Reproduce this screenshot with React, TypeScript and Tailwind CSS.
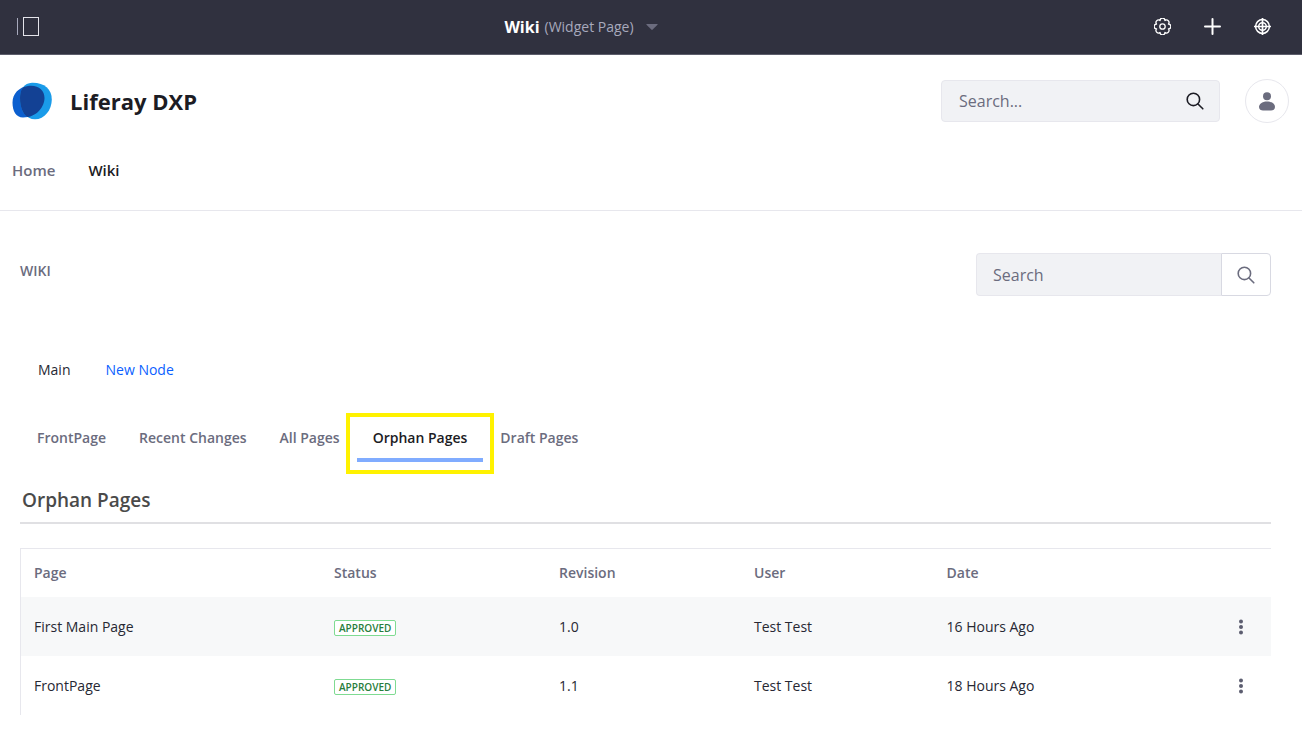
import type { ReactNode } from 'react';

interface WikiPage {
  title: string;
  status: string;
  revision: string;
  user: string;
  date: string;
}

const PAGES: WikiPage[] = [
  { title: 'First Main Page', status: 'APPROVED', revision: '1.0', user: 'Test Test', date: '16 Hours Ago' },
  { title: 'FrontPage', status: 'APPROVED', revision: '1.1', user: 'Test Test', date: '18 Hours Ago' },
];

const TABS = ['FrontPage', 'Recent Changes', 'All Pages', 'Orphan Pages', 'Draft Pages'];
const ACTIVE_TAB = 'Orphan Pages';

function SearchIcon({ className }: { className?: string }) {
  return (
    <svg viewBox="0 0 18 18" className={className} fill="none" stroke="currentColor" strokeWidth="1.6" strokeLinecap="round">
      <circle cx="7.4" cy="7.4" r="6.2" />
      <path d="M12 12l4.8 4.8" />
    </svg>
  );
}

function Logo() {
  return (
    <svg viewBox="0 0 40 38" className="w-10 h-[38px]">
      <defs>
        <clipPath id="logo-left">
          <path d="M16 4C26 2.500 32.500 8 32.500 16C32.500 24 25.500 35.500 11 35.500C4 35.500 0.500 29 0.500 20.500C0.500 11.500 7 5.300 16 4Z" />
        </clipPath>
      </defs>
      <path fill="#0b5fcf" d="M16 4C26 2.500 32.500 8 32.500 16C32.500 24 25.500 35.500 11 35.500C4 35.500 0.500 29 0.500 20.500C0.500 11.500 7 5.300 16 4Z" />
      <path fill="#1a9be9" d="M20 0.800C32 0.500 39.800 7 39.800 17.500C39.800 28 32.500 37.300 23 37.300C14 37.300 8 29.500 8 16C8 7.500 12 1.200 20 0.800Z" />
      <path clipPath="url(#logo-left)" fill="#134194" d="M20 0.800C32 0.500 39.800 7 39.800 17.500C39.800 28 32.500 37.300 23 37.300C14 37.300 8 29.500 8 16C8 7.500 12 1.200 20 0.800Z" />
    </svg>
  );
}

function BarButton({ label, children }: { label: string; children: ReactNode }) {
  return (
    <button aria-label={label} className="w-5 h-5 flex items-center justify-center text-white">
      {children}
    </button>
  );
}

function ControlBar() {
  return (
    <header className="h-[55px] flex items-center bg-[#30313f] border-b border-[#5c5d6b] px-4 pb-px">
      <div className="flex-[31]">
        <button aria-label="Product Menu" className="block">
          <svg viewBox="0 0 23 20" className="w-[23px] h-5" fill="none" shapeRendering="crispEdges">
            <path d="M1.500 1v17" stroke="#a7a9bc" />
            <rect x="7.500" y="0.500" width="15" height="18" stroke="#e4e4ea" />
          </svg>
        </button>
      </div>
      <button className="flex items-center text-sm text-[#a7a9bc]">
        <span className="text-base font-bold text-white mr-[5px]">Wiki</span>
        (Widget Page)
        <svg viewBox="0 0 12 6" className="w-3 h-[6px] ml-3">
          <path d="M0.800 0h10.400q.8 0 .3.700L6.700 5.600q-.7.600-1.400 0L.5.700Q0 0 .8 0Z" fill="#6b6c7e" />
        </svg>
      </button>
      <div className="flex-[39] flex justify-end gap-[30px] pr-[14px]">
        <BarButton label="Configure Page">
          <svg viewBox="0 0 17 17" className="w-[17px] h-[17px]" fill="none" stroke="currentColor" strokeWidth="1.300" strokeLinejoin="round">
            <path d="M14.400 6.050A2.450 2.450 0 0 1 14.400 10.950A2.450 2.450 0 0 1 10.950 14.400A2.450 2.450 0 0 1 6.050 14.400A2.450 2.450 0 0 1 2.600 10.950A2.450 2.450 0 0 1 2.600 6.050A2.450 2.450 0 0 1 6.050 2.600A2.450 2.450 0 0 1 10.950 2.600A2.450 2.450 0 0 1 14.400 6.050Z" />
            <circle cx="8.500" cy="8.500" r="2.700" />
          </svg>
        </BarButton>
        <BarButton label="Add">
          <svg viewBox="0 0 17 17" className="w-[17px] h-[17px]" stroke="currentColor" strokeWidth="2" strokeLinecap="round">
            <path d="M8.500 1v15M1 8.500h15" />
          </svg>
        </BarButton>
        <BarButton label="Simulation">
          <svg viewBox="0 0 17 17" className="w-[17px] h-[17px]" fill="none" stroke="currentColor" strokeWidth="1.500">
            <circle cx="8.500" cy="8.500" r="6.900" />
            <circle cx="8.500" cy="8.500" r="3.800" />
            <path d="M8.500 0v17M0 8.500h17" strokeWidth="1.700" />
          </svg>
        </BarButton>
      </div>
    </header>
  );
}

function SiteHeader() {
  return (
    <div className="border-b border-[#e7e7ed] px-3 pt-6 pb-7">
      <div className="flex items-center pr-px">
        <a href="#site" className="flex items-center gap-[18px] text-[#1c1c24]">
          <Logo />
          <span className="text-[22px] leading-8 font-bold">Liferay DXP</span>
        </a>
        <form className="ml-auto flex items-center w-[279px] h-[42px] rounded border border-[#e7e7ed] bg-[#f1f2f5] pl-[17px] pr-[15px]">
          <input aria-label="Search site" placeholder="Search..." className="flex-1 min-w-0 bg-transparent outline-none text-base placeholder:text-[#6b6c7e]" />
          <button type="button" aria-label="Submit search" className="text-[#1c1c24]">
            <SearchIcon className="w-[18px] h-[18px]" />
          </button>
        </form>
        <button aria-label="User Profile" className="ml-[25px] w-11 h-11 rounded-full border border-[#e7e7ed] flex items-center justify-center">
          <svg viewBox="0 0 16 19" className="w-4 h-[19px]" fill="#6b6c7e">
            <circle cx="8" cy="4.300" r="4" />
            <path d="M8 9.500c5 0 8 2.600 8 5.600 0 2.500-2 3.400-4 3.400H4c-2 0-4-.9-4-3.400 0-3 3-5.600 8-5.600Z" />
          </svg>
        </button>
      </div>
      <nav className="flex gap-[33px] mt-[35px] text-[15px] leading-6 font-semibold">
        <a href="#home" className="text-[#6b6c7e]">Home</a>
        <a href="#wiki" className="text-[#1c1c24]">Wiki</a>
      </nav>
    </div>
  );
}

function WikiTabs() {
  return (
    <nav className="flex gap-px pl-[2px] text-sm leading-6 font-semibold text-[#6b6c7e]">
      {TABS.map(tab => (
        <a
          key={tab}
          href="#tab"
          className={`relative px-4 py-2 border-b-4 first:pl-[15px] ${tab === ACTIVE_TAB ? 'border-[#80acff] text-[#1c1c24]' : 'border-transparent'}`}
        >
          {tab}
          {tab === ACTIVE_TAB && <span className="absolute -inset-x-[11px] -top-[5px] -bottom-4 border-4 border-[#fff200]" />}
        </a>
      ))}
    </nav>
  );
}

function PagesTable() {
  return (
    <table className="w-full table-fixed border-t border-l border-[#e7e7ed] border-separate border-spacing-0 text-sm text-left text-[#272833]">
      <thead>
        <tr className="h-12 text-[#6b6c7e]">
          <th className="w-[24%] pl-[13px] font-semibold">Page</th>
          <th className="w-[18%] pl-[13px] font-semibold">Status</th>
          <th className="w-[15.6%] pl-[13px] font-semibold">Revision</th>
          <th className="w-[15.4%] pl-[13px] font-semibold">User</th>
          <th className="pl-[13px] font-semibold">Date</th>
          <th className="w-[60px]" aria-label="Actions" />
        </tr>
      </thead>
      <tbody>
        {PAGES.map(page => (
          <tr key={page.title} className="h-[59px] odd:bg-[#f7f8f9]">
            <td className="pl-[13px]">{page.title}</td>
            <td className="pl-[13px]">
              <span className="inline-block align-middle rounded-xs border border-[#7fdb92] bg-white px-1 text-[10px] leading-[14px] font-semibold text-[#287d3c]">
                {page.status}
              </span>
            </td>
            <td className="pl-[13px]">{page.revision}</td>
            <td className="pl-[13px]">{page.user}</td>
            <td className="pl-[13px]">{page.date}</td>
            <td>
              <button aria-label={`Actions for ${page.title}`} className="mx-auto w-6 h-6 flex items-center justify-center">
                <svg viewBox="0 0 4 16" className="w-1 h-4" fill="#5c5d70">
                  <circle cx="2" cy="2.500" r="2" />
                  <circle cx="2" cy="8" r="2" />
                  <circle cx="2" cy="13.500" r="2" />
                </svg>
              </button>
            </td>
          </tr>
        ))}
      </tbody>
    </table>
  );
}

export default function App() {
  return (
    <div className="min-h-screen bg-white text-[#272833] font-['Open_Sans','Noto_Sans',sans-serif]">
      <ControlBar />
      <SiteHeader />
      <main className="pl-5 pr-[31px] pt-[42px] pb-6">
        <div className="flex items-center justify-between">
          <h1 className="text-sm font-semibold text-[#6b6c7e] pb-2">WIKI</h1>
          <form className="flex w-[295px] h-[43px]">
            <input aria-label="Search wiki" placeholder="Search" className="flex-1 min-w-0 rounded-l border border-r-0 border-[#e7e7ed] bg-[#f1f2f5] pl-4 outline-none text-base placeholder:text-[#6b6c7e]" />
            <button type="button" aria-label="Search" className="w-[50px] rounded-r border border-[#d8d9e2] flex items-center justify-center text-[#6b6c7e]">
              <SearchIcon className="w-[18px] h-[18px]" />
            </button>
          </form>
        </div>

        <nav className="flex gap-[35px] pl-[18px] mt-[62px] text-sm leading-6">
          <a href="#main">Main</a>
          <a href="#node" className="text-[#0b5fff]">New Node</a>
        </nav>

        <div className="mt-9">
          <WikiTabs />
        </div>

        <h2 className="mt-6 mb-6 pl-[2px] pb-2 border-b-2 border-[#e0e0e3] text-[19px] leading-7 font-semibold text-[#4a4a4a]">
          Orphan Pages
        </h2>

        <PagesTable />
      </main>
    </div>
  );
}
